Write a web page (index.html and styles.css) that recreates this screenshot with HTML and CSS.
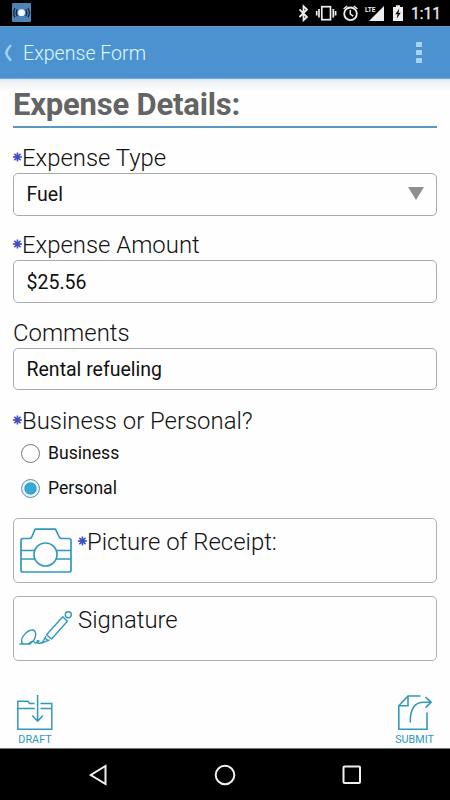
FILE: index.html
```html
<!DOCTYPE html>
<html lang="en">
<head>
  <meta charset="UTF-8">
  <meta name="viewport" content="width=device-width, initial-scale=1.0">
  <title>Expense Form</title>
  <link rel="stylesheet" href="styles.css">
</head>
<body>
  <div class="status-bar">
    <svg class="app-icon" width="19" height="19" viewBox="0 0 19 19">
      <rect width="19" height="19" rx="1" fill="#4f83b5"/>
      <circle cx="9.5" cy="9.7" r="3.4" fill="#f4fbff"/>
      <path d="M5.2 6.2Q3.2 9.7 5.2 13.2M3 5Q.3 9.7 3 14.4M13.8 6.2Q15.8 9.7 13.8 13.2M16 5Q18.7 9.7 16 14.4" fill="none" stroke="#10263a" stroke-width="1.2"/>
    </svg>
    <svg width="153" height="26" viewBox="297 0 153 26">
      <path d="M299.5 9.3L307 17L303.500 20.200V6.300L307 9.500L299.500 17" fill="none" stroke="#eee" stroke-width="1.8"/>
      <rect x="321.800" y="6.700" width="8.700" height="13" fill="none" stroke="#eee" stroke-width="1.700"/>
      <path d="M319 9v8.500M333.300 9v8.500M316.700 11v4.500M335.600 11v4.500" stroke="#eee" stroke-width="1.700"/>
      <circle cx="350.500" cy="13.800" r="6.300" fill="none" stroke="#eee" stroke-width="1.800"/>
      <path d="M350.300 10v4.200l3 2M343.600 9l3.600-3M357.400 9l-3.600-3" fill="none" stroke="#eee" stroke-width="1.500"/>
      <path d="M384 6v15h-15z" fill="#eee"/>
      <text class="lte" x="365" y="12" textLength="10.500" lengthAdjust="spacingAndGlyphs">LTE</text>
      <path d="M393 7h3V5.200h4V7h3v14h-10z" fill="#eee"/>
      <path d="M399.300 8.500l-4 5.700h2.200l-.8 4.500 4-6h-2.200z" fill="#111"/>
      <text class="clock" x="411" y="19.300">1:11</text>
    </svg>
  </div>

  <header class="app-bar">
    <svg class="back" width="9" height="18" viewBox="0 0 9 18">
      <path d="M7 1Q3 5 2.200 9Q3 13 7 16.500" fill="none" stroke="#a5d2f5" stroke-width="2.400"/>
    </svg>
    <h1>Expense Form</h1>
    <div class="menu"><span></span><span></span><span></span></div>
  </header>

  <main>
    <h2>Expense Details:</h2>

    <div class="field">
      <div class="label required">Expense Type</div>
      <div class="input">Fuel <span class="arrow"></span></div>
    </div>
    <div class="field">
      <div class="label required">Expense Amount</div>
      <div class="input">$25.56</div>
    </div>
    <div class="field">
      <div class="label">Comments</div>
      <div class="input">Rental refueling</div>
    </div>

    <div class="choices">
      <div class="label required">Business or Personal?</div>
      <div class="choice"><span class="radio"></span>Business</div>
      <div class="choice"><span class="radio checked"></span>Personal</div>
    </div>

    <div class="card">
      <svg width="54" height="63" viewBox="19 519 54 63" fill="none" stroke="#3199b9" stroke-width="1.700" stroke-linejoin="round">
        <path d="M22 538.500h7.500c1.500 0 2-.8 2.500-2l3-7.300h20.500l3.500 7.300c.5 1.200 1 2 2.500 2H69q2 0 2 2V570q0 2-2 2H23q-2 0-2-2v-29.500q0-2 2-2z"/>
        <circle cx="45.500" cy="554.500" r="11.500"/>
        <path d="M21 550.500h13.700M56.300 550.500H71M21 559h14M56 559h15"/>
      </svg>
      <div class="label required">Picture of Receipt:</div>
    </div>
    <div class="card">
      <svg width="54" height="63" viewBox="19 598 54 63" fill="none" stroke="#3199b9" stroke-width="1.400" stroke-linejoin="round">
        <circle cx="68.300" cy="615.800" r="3"/>
        <path d="M62.800 617.800l4.600 4.400L51.500 640l-5-4.300zM46 637l-3.800 6.800 7.500-3M45 639l2.500 2.300"/>
        <path d="M19.500 645H30C38 639.500 36.500 630 32 631C26 631.500 20 640 22 643.500C23.500 646 28 645.500 31 643Q33.500 641 34.500 643.500Q36 645 39 642Q36 641 37.500 644Q39.500 644.500 42.200 643.800"/>
      </svg>
      <div class="label">Signature</div>
    </div>
  </main>

  <footer class="actions">
    <div class="action">
      <svg width="38" height="38" viewBox="16 694 38 38" fill="none" stroke="#3199b9" stroke-width="1.500">
        <path d="M34.500 703.500H29.500l-1.500-2.200H17.800v28h34V703.500H40.500M17.800 708.500h17M40.500 708.500h11.300M37.600 695v26M32.200 715.500l5.400 5.600 5.400-5.600"/>
      </svg>
      <span>DRAFT</span>
    </div>
    <div class="action">
      <svg width="38" height="38" viewBox="396 694 38 38" fill="none" stroke="#3199b9" stroke-width="1.600">
        <path d="M420.500 696H408l-9.200 9.700V729.300h28.200V712.500M408 696v9.700h-9.200M410.300 722.500C410 708 415 702.300 424 702.300H431M425.500 697l5.600 5.300-5.600 5.400"/>
      </svg>
      <span>SUBMIT</span>
    </div>
  </footer>

  <nav class="nav-bar">
    <svg width="20" height="22" viewBox="0 0 20 22"><path d="M17.500 2v18L2.800 11z"/></svg>
    <svg width="22" height="22" viewBox="0 0 22 22"><circle cx="11" cy="11" r="9.300"/></svg>
    <svg width="20" height="20" viewBox="0 0 20 20"><rect x="1.500" y="1.500" width="16.500" height="16.500" rx="1"/></svg>
  </nav>
</body>
</html>
```
FILE: styles.css
```css
* {
  margin: 0;
  padding: 0;
  box-sizing: border-box;
}

body {
  width: 450px;
  height: 800px;
  display: flex;
  flex-direction: column;
  overflow: hidden;
  background: #fefefe;
  color: #111;
  font-family: Roboto, sans-serif;
}

svg {
  display: block;
  flex-shrink: 0;
}

.status-bar {
  height: 26px;
  background: #000;
  display: flex;
  justify-content: space-between;
  padding-left: 12px;
}

.app-icon {
  margin-top: 3px;
}

.lte {
  font-size: 8px;
  font-weight: 700;
  fill: #eee;
}

.clock {
  font-size: 15.6px;
  font-weight: 400;
  font-kerning: none;
  fill: #eee;
  stroke: #eee;
  stroke-width: 0.3px;
}

.app-bar {
  height: 53px;
  background: #4d92d0;
  border-top: 1px solid #6b9cc8;
  border-bottom: 1px solid #75aad6;
  display: flex;
  align-items: center;
  padding: 0 28px 0 4px;
}

.app-bar h1 {
  flex: 1;
  margin-left: 10px;
  padding-top: 2px;
  font-size: 19.6px;
  font-weight: 300;
  color: #dcfaff;
}

.menu {
  display: flex;
  flex-direction: column;
  gap: 3px;
}

.menu span {
  width: 6px;
  height: 5px;
  background: #a6d3f5;
}

main {
  flex: 1;
  padding: 0 13px;
  background: linear-gradient(#d8e6f2 0, #f0f1f3 3px, #fefefe 13px);
}

h2 {
  height: 49px;
  padding-top: 8px;
  border-bottom: 2px solid #5b97c2;
  font-size: 31px;
  line-height: 36px;
  font-weight: 700;
  letter-spacing: -0.2px;
  color: #646464;
}

.field {
  height: 87.4px;
  padding-top: 15px;
}

.label {
  height: 30px;
  font-size: 23.9px;
  line-height: 30px;
  font-weight: 300;
  white-space: nowrap;
}

.required::before {
  content: "✳";
  display: inline-block;
  width: 9px;
  font-family: "DejaVu Sans", sans-serif;
  font-size: 11px;
  line-height: 1;
  font-weight: 700;
  text-indent: -0.5px;
  color: #3c50c4;
  -webkit-text-stroke: 0.9px #3c50c4;
  vertical-align: 5px;
}

.input {
  height: 42.5px;
  padding: 1px 12.5px 0 12.5px;
  border: 1px solid #aaa;
  border-radius: 5px;
  display: flex;
  align-items: center;
  justify-content: space-between;
  font-size: 19.5px;
}

.arrow {
  border: 8.5px solid transparent;
  border-top: 13px solid #8f8f8f;
  border-bottom: 0;
  margin-bottom: 3px;
}

.choices {
  height: 127.8px;
  padding-top: 15.4px;
}

.choice {
  height: 35px;
  display: flex;
  align-items: center;
  padding-left: 8px;
  font-size: 17.6px;
}

.radio {
  width: 19px;
  height: 19px;
  margin-right: 8px;
  border: 1px solid #777;
  border-radius: 50%;
}

.checked {
  border-color: #5b93a8;
  background: radial-gradient(circle, #36a9d6 5px, #3587a4 5.5px, #e2f4fa 6.5px);
}

.card {
  height: 65px;
  margin-bottom: 13px;
  padding-left: 5px;
  border: 1px solid #b0b0b0;
  border-radius: 5px;
  display: flex;
}

.card .label {
  margin-left: 5px;
  margin-top: 8px;
}

.actions {
  height: 56px;
  display: flex;
  justify-content: space-between;
  padding: 2px 16px 0 16px;
}

.action {
  display: flex;
  flex-direction: column;
  align-items: center;
  color: #3199b9;
  font-size: 10.8px;
  line-height: 15px;
}

.nav-bar {
  height: 52px;
  background: #000;
  border-top: 1px solid #777;
  display: flex;
  align-items: center;
  justify-content: space-between;
  padding: 0 88px;
}

.nav-bar path,
.nav-bar circle,
.nav-bar rect {
  fill: none;
  stroke: #f0f0f0;
  stroke-width: 2;
}
```
